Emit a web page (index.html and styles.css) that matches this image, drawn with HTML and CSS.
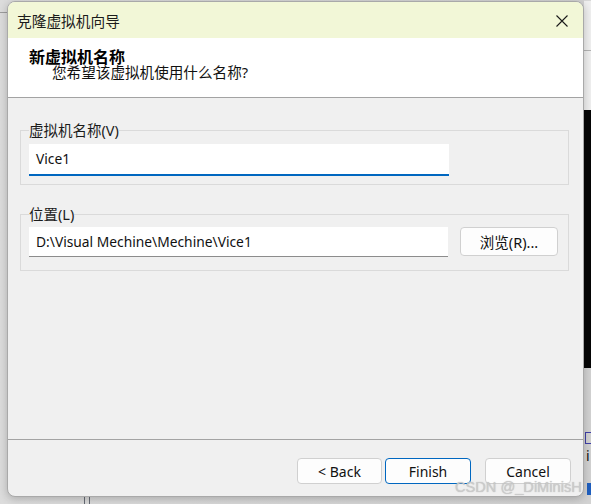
FILE: index.html
```html
<!DOCTYPE html>
<html lang="zh-CN">
<head>
<meta charset="utf-8">
<title>克隆虚拟机向导</title>
<link rel="stylesheet" href="styles.css">
</head>
<body>
<div class="desktop">
  <div class="bg-topline-left"></div>
  <div class="bg-right-top"></div>
  <div class="bg-right-dark"></div>
  <div class="bg-right-glyph1"></div>
  <div class="bg-right-i">i</div>
  <div class="bg-right-glyph2"></div>
  <div class="bg-vline v1"></div>
  <div class="bg-vline v2"></div>

  <div class="dialog">
    <div class="titlebar">
      <span class="title">克隆虚拟机向导</span>
      <svg class="close" width="12" height="12" viewBox="0 0 12 12"><path d="M0.5 0.5 L11.5 11.5 M11.5 0.5 L0.5 11.5" stroke="#1a1a1a" stroke-width="1.1" fill="none"/></svg>
    </div>
    <div class="header">
      <div class="heading">新虚拟机名称</div>
      <div class="subheading">您希望该虚拟机使用什么名称?</div>
    </div>
    <div class="content">
      <fieldset class="group group-name">
        <legend>虚拟机名称(V)</legend>
        <div class="input input-active">Vice1</div>
      </fieldset>
      <fieldset class="group group-loc">
        <legend>位置(L)</legend>
        <div class="row">
          <div class="input">D:\Visual Mechine\Mechine\Vice1</div>
          <button class="btn browse">浏览(R)...</button>
        </div>
      </fieldset>
    </div>
    <div class="footer">
      <button class="btn fbtn back">&lt; Back</button>
      <button class="btn fbtn primary">Finish</button>
      <button class="btn fbtn cancel">Cancel</button>
    </div>
  </div>
  <div class="watermark">CSDN @_DiMinisH</div>
</div>
</body>
</html>
```

FILE: styles.css
```css
html, body {
  margin: 0;
  padding: 0;
}
body {
  background: #d4d4d4;
  font-family: "Noto Sans", "Noto Sans CJK SC", sans-serif;
  color: #000;
}
.desktop {
  position: relative;
  width: 591px;
  height: 504px;
  overflow: hidden;
  background: linear-gradient(90deg, #dcdcdc 0, #d2d2d2 100%);
  padding: 1px 0 0 7px;
  box-sizing: border-box;
}
.bg-topline-left {
  position: absolute;
  left: 0; top: 12px;
  width: 8px; height: 1px;
  background: #9c9c9c;
}
.bg-right-top {
  position: absolute;
  left: 584px; top: 0;
  width: 7px; height: 110px;
  background: #efefef;
  border-top: 1px solid #d8d8d8;
}
.bg-right-top::after {
  content: "";
  position: absolute;
  left: 0; top: 49px;
  width: 7px; height: 1px;
  background: #b4b4b4;
}
.bg-right-dark {
  position: absolute;
  left: 584px; top: 110px;
  width: 7px; height: 258px;
  background: #050505;
}
.bg-right-glyph1 {
  position: absolute;
  left: 585px; top: 432px;
  width: 5px; height: 10px;
  border: 1px solid #3f3fa8;
}
.bg-right-i {
  position: absolute;
  left: 586px; top: 448px;
  font-size: 14px;
  line-height: 16px;
  color: #111;
}
.bg-right-glyph2 {
  position: absolute;
  left: 587px; top: 483px;
  width: 4px; height: 12px;
  background: #1f5fbf;
}
.bg-vline {
  position: absolute;
  top: 497px;
  width: 1px; height: 7px;
  background: #666b74;
}
.bg-vline.v1 { left: 84px; }
.bg-vline.v2 { left: 89px; }

.dialog {
  position: relative;
  width: 577px;
  height: 496px;
  box-sizing: border-box;
  border: 1px solid #a9a9a9;
  border-radius: 8px;
  overflow: hidden;
  background: #f0f0f0;
  box-shadow: 0 2px 8px rgba(0,0,0,0.22);
  display: flex;
  flex-direction: column;
}
.titlebar {
  height: 36px;
  flex: none;
  background: #f2f7d7;
  display: flex;
  align-items: center;
  justify-content: space-between;
  padding: 0 15px 0 9px;
}
.title {
  font-size: 14.7px;
  line-height: 20px;
  padding-top: 1px;
  color: #1b1b1b;
}
.close {
  display: block;
  margin-top: 1px;
}
.header {
  flex: none;
  background: #fff;
  border-bottom: 1px solid #a3a3a3;
  padding: 12px 0 0 21px;
  box-sizing: border-box;
  height: 60px;
}
.heading {
  font-size: 16px;
  font-weight: bold;
  line-height: 15px;
}
.subheading {
  font-size: 14.6px;
  line-height: 15px;
  padding-left: 23px;
  color: #111;
}
.content {
  flex: 1;
  padding: 22px 0 0 12px;
}
.group {
  margin: 0;
  width: 549px;
  box-sizing: border-box;
  border: 1px solid #dadada;
  padding: 4px 8px 8px 8px;
}
.group legend {
  padding: 0;
  font-size: 14.5px;
  line-height: 20px;
  color: #1b1b1b;
}
.group-loc {
  margin-top: 19px;
  padding-top: 3px;
  padding-bottom: 13px;
}
.input {
  width: 420px;
  height: 32px;
  box-sizing: border-box;
  background: #fff;
  border-bottom: 1px solid #8c8c8c;
  padding-left: 7px;
  font-size: 13.8px;
  line-height: 30px;
  color: #111;
  white-space: nowrap;
}
.input-active {
  border-bottom: 2px solid #0067c0;
}
.row {
  display: flex;
  align-items: flex-start;
}
.row .input {
  width: 419px;
  height: 30px;
  line-height: 29px;
}
.btn {
  font-family: "Noto Sans", "Noto Sans CJK SC", sans-serif;
  background: #fdfdfd;
  border: 1px solid #d0d0d0;
  border-radius: 4px;
  color: #111;
  padding: 0;
  box-sizing: border-box;
  font-size: 14px;
}
.browse {
  margin-left: 12px;
  width: 98px;
  height: 29px;
  line-height: 26px;
  font-size: 14.5px;
}
.footer {
  flex: none;
  height: 57px;
  border-top: 1px solid #a3a3a3;
  box-sizing: border-box;
  display: flex;
  justify-content: flex-end;
  align-items: flex-start;
  padding: 18px 12px 0 0;
}
.fbtn {
  width: 86px;
  height: 26px;
  line-height: 23px;
}
.fbtn.back { width: 85px; }
.fbtn.primary {
  margin-left: 3px;
  border-color: #0067c0;
}
.fbtn.cancel {
  margin-left: 14px;
}
.watermark {
  position: absolute;
  left: 455px;
  top: 479px;
  white-space: nowrap;
  font-family: "Liberation Sans", Arial, sans-serif;
  font-size: 14.6px;
  line-height: 17px;
  color: rgba(205,205,205,0.9);
  text-shadow: 0 0 1px rgba(140,140,140,0.6);
}
```
